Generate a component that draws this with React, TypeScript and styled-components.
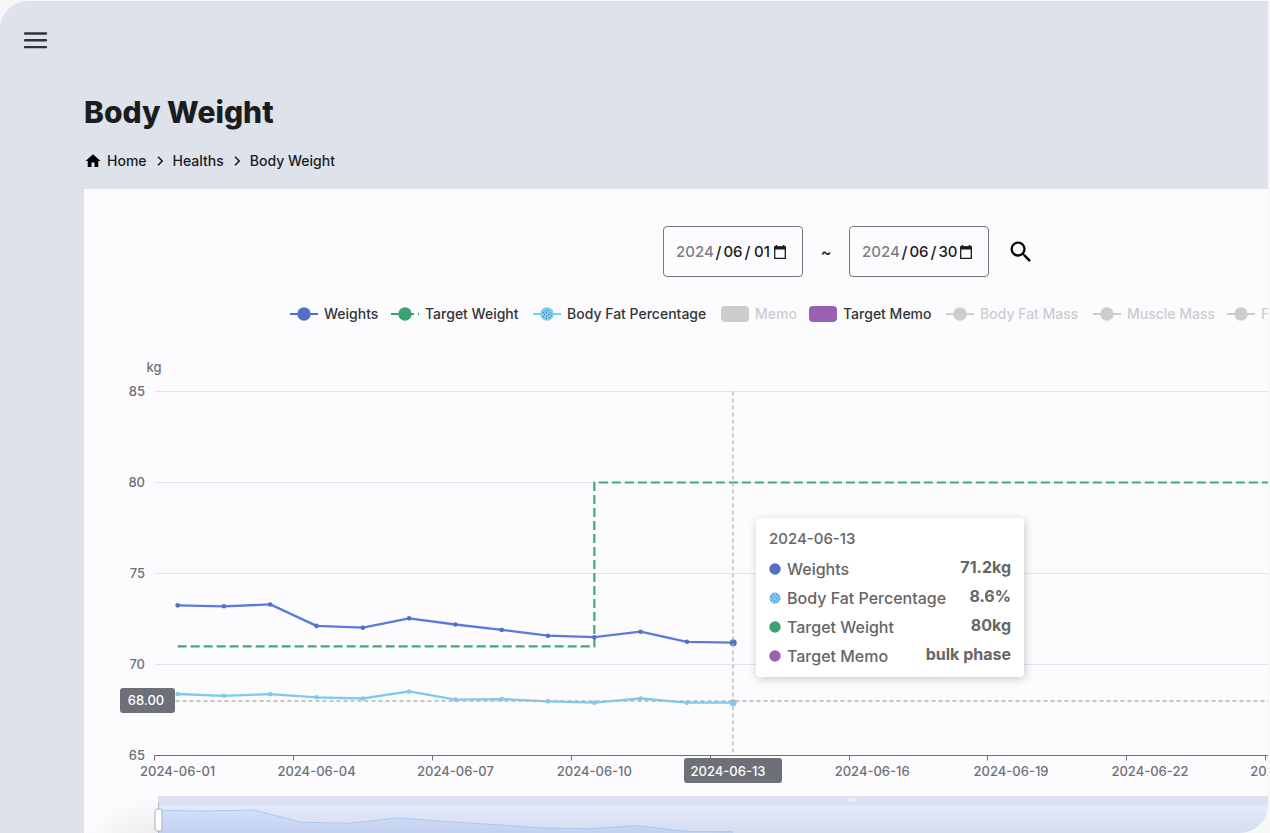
import React from "react";
import styled, { createGlobalStyle } from "styled-components";

const GlobalStyle = createGlobalStyle`
  * { box-sizing: border-box; }
  body {
    margin: 0;
    background: #f7f7f7;
    font-family: Inter, "Noto Sans", sans-serif;
    color: #1b1c1e;
  }
`;

const Frame = styled.div`
  height: 100vh;
  padding: 1px 2px 0 0;
`;

const AppWindow = styled.div`
  height: 100%;
  display: flex;
  overflow: hidden;
  background: #dee2eb;
  border-radius: 28px 0 28px 0;
`;

const Rail = styled.nav`
  flex: 0 0 84px;
  padding: 27px 24px;
`;

const IconButton = styled.button`
  display: flex;
  padding: 0;
  border: 0;
  background: none;
  color: inherit;
  cursor: pointer;
`;

const Main = styled.main`
  flex: 1;
  min-width: 0;
  display: flex;
  flex-direction: column;
`;

const PageHeader = styled.header`
  padding: 91px 0 18px;
`;

const Title = styled.h1`
  margin: 0;
  font-size: 30px;
  line-height: 40px;
  font-weight: 800;
`;

const Breadcrumbs = styled.nav`
  display: flex;
  align-items: center;
  gap: 7px;
  margin-top: 19px;
  font-size: 14px;
  line-height: 20px;
  font-weight: 500;
`;

const Crumb = styled.a`
  display: flex;
  align-items: center;
  gap: 5px;
  color: inherit;
  text-decoration: none;
`;

const Panel = styled.section`
  flex: 1;
  min-height: 0;
  overflow: hidden;
  background: #fcfcff;
`;

const Content = styled.div`
  position: relative;
  min-width: 1530px;
`;

const Filters = styled.form`
  display: flex;
  align-items: center;
  justify-content: center;
  padding-top: 37px;
`;

const DateBox = styled.fieldset`
  display: flex;
  align-items: center;
  width: 140px;
  height: 51px;
  margin: 0;
  padding: 0 12px;
  border: 1px solid #76777c;
  border-radius: 4px;
  font-size: 16px;
  font-weight: 500;
`;

const DatePart = styled.input<{ $chars: number; $muted?: boolean }>`
  width: ${(p) => (p.$chars === 4 ? 38 : 20)}px;
  padding: 0;
  border: 0;
  outline: 0;
  background: none;
  font: inherit;
  font-size: 15px;
  line-height: 20px;
  text-align: center;
  color: ${(p) => (p.$muted ? "#7d7e82" : "#1b1c1e")};
`;

const Slash = styled.span`
  width: 9px;
  text-align: center;
`;

const Tilde = styled.span`
  width: 46px;
  text-align: center;
  font-size: 16px;
  font-weight: 500;
`;

const SearchButton = styled(IconButton)`
  margin-left: 18px;
`;

const Legend = styled.ul`
  display: grid;
  grid-template-columns: 101px 142px 188px 88px 137px 147px 134px auto;
  margin: 27px 0 18px;
  padding: 0 0 0 206px;
  list-style: none;
`;

const LegendItem = styled.li<{ $off?: boolean }>`
  display: flex;
  align-items: center;
  gap: 6px;
  font-size: 14px;
  line-height: 20px;
  font-weight: 500;
  white-space: nowrap;
  color: ${(p) => (p.$off ? "#cccccf" : "#333438")};
`;

const Chart = styled.svg`
  display: block;
  font-family: inherit;
`;

const AxisText = styled.text`
  font-size: 13px;
  font-weight: 500;
  fill: #6e7079;
`;

const PointerText = styled(AxisText)`
  fill: #ffffff;
`;

const Tooltip = styled.div`
  position: absolute;
  left: 672px;
  top: 329px;
  width: 268px;
  padding: 10px 13px;
  border-radius: 4px;
  background: #ffffff;
  box-shadow: 1px 2px 10px rgba(0, 0, 0, 0.2);
  color: #666666;
  font-size: 16px;
`;

const TooltipTitle = styled.div`
  line-height: 22px;
  font-size: 15px;
  font-weight: 500;
`;

const TooltipRow = styled.div`
  display: flex;
  align-items: center;
  margin-top: 8px;
  line-height: 22px;

  & + & {
    margin-top: 7px;
  }
`;

const TooltipName = styled.span`
  flex: 1;
  margin-left: 6px;
  font-weight: 500;
`;

const TooltipValue = styled.strong`
  padding-bottom: 4px;
  line-height: 18px;
  font-weight: 700;
`;

const BLUE = "#5470c6";
const GREEN = "#3ba272";
const SKY = "#7ccbee";
const PURPLE = "#9a60b4";
const OFF = "#cccccf";

const DECAL = [
  [-2, -4], [1, -4], [-4, -2], [-1, -2], [3, -2], [-3, 0], [1, 0], [4, 1], [-1, 2], [-4, 2], [2, 3], [-1, 4],
];

function Dots({ cx, cy }: { cx: number; cy: number }) {
  return (
    <g fill="#3468ae">
      {DECAL.map(([x, y]) => (
        <rect key={`${x},${y}`} x={cx + x} y={cy + y} width="1" height="1" opacity="0.75" />
      ))}
    </g>
  );
}

type Entry = { name: string; color: string; shape?: "block"; dotted?: boolean; dashed?: boolean; off?: boolean };

const LEGEND: Entry[] = [
  { name: "Weights", color: BLUE },
  { name: "Target Weight", color: GREEN, dashed: true },
  { name: "Body Fat Percentage", color: SKY, dotted: true },
  { name: "Memo", color: OFF, shape: "block", off: true },
  { name: "Target Memo", color: PURPLE, shape: "block" },
  { name: "Body Fat Mass", color: OFF, off: true },
  { name: "Muscle Mass", color: OFF, off: true },
  { name: "F", color: OFF, off: true },
];

function LegendMark({ entry }: { entry: Entry }) {
  return (
    <svg width="28" height="16" aria-hidden="true">
      {entry.shape === "block" ? (
        <rect width="28" height="16" rx="4" fill={entry.color} />
      ) : (
        <>
          <path d="M0 8H28" stroke={entry.color} strokeWidth="2" strokeDasharray={entry.dashed ? "23 4 2 9" : undefined} />
          <circle cx="14" cy="8" r="6.7" fill={entry.color} />
          {entry.dotted && <Dots cx={14} cy={8} />}
        </>
      )}
    </svg>
  );
}

function DateField({ label, year, month, day }: { label: string; year: string; month: string; day: string }) {
  return (
    <DateBox aria-label={label}>
      <DatePart aria-label="Year" defaultValue={year} $chars={4} $muted />
      <Slash>/</Slash>
      <DatePart aria-label="Month" defaultValue={month} $chars={2} />
      <Slash>/</Slash>
      <DatePart aria-label="Day" defaultValue={day} $chars={2} />
      <IconButton type="button" aria-label="Open calendar">
        <svg width="16" height="16" viewBox="0 0 16 16">
          <path d="M2.7 3H13.3V14.3H2.7Z" fill="none" stroke="#1b1c1e" strokeWidth="1.3" />
          <path d="M2 2.4H14V5.6H2ZM3.6 1H5.2V3H3.6ZM10.8 1H12.4V3H10.8Z" fill="#1b1c1e" />
        </svg>
      </IconButton>
    </DateBox>
  );
}

function Chevron() {
  return (
    <svg width="12" height="12" viewBox="0 0 12 12" aria-hidden="true">
      <path d="M4 1.8 8.2 6 4 10.2" fill="none" stroke="#1b1c1e" strokeWidth="1.6" />
    </svg>
  );
}

const STEP = 46.3;
const LEFT = 70.5;
const FLOOR = 413.5;
const dayX = (i: number) => LEFT + STEP * (i + 0.5);
const kgY = (kg: number) => FLOOR - (kg - 65) * 18.2;

const WEIGHTS = [73.25, 73.2, 73.3, 72.12, 72.02, 72.54, 72.2, 71.9, 71.58, 71.5, 71.8, 71.25, 71.2];
const FAT = [68.38, 68.28, 68.37, 68.2, 68.13, 68.52, 68.07, 68.1, 67.98, 67.9, 68.13, 67.9, 67.9];
const TICK_LABELS = ["01", "04", "07", "10", "13", "16", "19", "22", "25"];
const ACTIVE_DAY = "13";

const toPath = (values: number[], y: (v: number) => number) =>
  values.map((v, i) => `${i ? "L" : "M"}${dayX(i).toFixed(1)} ${y(v).toFixed(1)}`).join("");

function Series({ values, color, line }: { values: number[]; color: string; line: string }) {
  return (
    <g fill={color}>
      <path d={toPath(values, kgY)} fill="none" stroke={line} strokeWidth="2.3" strokeLinejoin="bevel" />
      {values.map((v, i) => (
        <circle key={i} cx={dayX(i)} cy={kgY(v)} r={i === values.length - 1 ? 3.5 : 2.3} />
      ))}
    </g>
  );
}

function WeightChart() {
  const right = LEFT + STEP * 30;
  const overviewY = (v: number) => 468 + (73.3 - v) * 10.4;
  const overview = WEIGHTS.map((v, i) => `${i ? "L" : "M"}${74 + (i * 575) / 12} ${overviewY(v)}`).join("");
  return (
    <Chart width="1524" height="520" role="img" aria-label="Body weight by day">
      <defs>
        <linearGradient id="range" x1="0" y1="0" x2="0" y2="1">
          <stop offset="0" stopColor="#e4eafd" />
          <stop offset="1" stopColor="#d0d7ea" />
        </linearGradient>
        <linearGradient id="area" x1="0" y1="0" x2="0" y2="1">
          <stop offset="0" stopColor="#d1dff9" />
          <stop offset="1" stopColor="#bccaea" />
        </linearGradient>
        <radialGradient id="shade">
          <stop offset="0" stopColor="#000" stopOpacity="0.1" />
          <stop offset="1" stopColor="#000" stopOpacity="0" />
        </radialGradient>
      </defs>
      <AxisText x="70" y="30" textAnchor="middle">kg</AxisText>
      {[70, 75, 80, 85].map((kg) => (
        <path key={kg} d={`M${LEFT} ${kgY(kg)}H${right}`} stroke="#e0e6f1" />
      ))}
      {[65, 70, 75, 80, 85].map((kg) => (
        <AxisText key={kg} x="61" y={kgY(kg) + 4} textAnchor="end">{kg}</AxisText>
      ))}
      <path d={`M${LEFT} ${FLOOR}H${right}`} stroke="#6e7079" />
      {TICK_LABELS.map((day, i) => (
        <g key={day}>
          <path d={`M${Math.round(LEFT + i * STEP * 3 - 0.5) + 0.5} ${FLOOR}v5`} stroke="#6e7079" />
          {day !== ACTIVE_DAY && (
            <AxisText x={dayX(i * 3)} y="434" textAnchor="middle">2024-06-{day}</AxisText>
          )}
        </g>
      ))}

      <path
        d={`M${dayX(0)} ${kgY(71)}H${dayX(9)}V${kgY(80)}H${right}`}
        fill="none"
        stroke="#42aa7a"
        strokeWidth="2.2"
        strokeDasharray="9 4"
      />
      <Series values={FAT} color={SKY} line={SKY} />
      <Series values={WEIGHTS} color={BLUE} line="#5b7bdc" />

      <g stroke="#b2b3b8" strokeDasharray="4 3">
        <path d={`M${LEFT} 359H${right}`} strokeWidth="1.3" />
        <path d={`M649 ${kgY(85)}V${FLOOR}`} strokeWidth="1.3" />
      </g>
      <rect x="36" y="346" width="55" height="25" rx="3" fill="#6e7079" />
      <PointerText x="62" y="363" textAnchor="middle">68.00</PointerText>
      <rect x="600" y="416" width="98" height="25" rx="3" fill="#6e7079" />
      <PointerText x="644" y="434" textAnchor="middle">2024-06-13</PointerText>

      <ellipse cx="74" cy="520" rx="82" ry="66" fill="url(#shade)" />
      <rect x="74" y="454" width="1389" height="9" fill="#dbe1f0" />
      <rect x="74" y="463" width="1389" height="40" fill="url(#range)" />
      <path d={`${overview}V503H74Z`} fill="url(#area)" />
      <path d={overview} fill="none" stroke="#a8c8f0" />
      <path d="M765.5 456v4M768 456v4M770.5 456v4" stroke="#fff" />
      <path d="M74.5 461V503" stroke="#acb8d1" />
      <rect x="71" y="467" width="7" height="22" rx="2" fill="#fff" stroke="#a9adb7" />
    </Chart>
  );
}

const READINGS = [
  { name: "Weights", value: "71.2kg", color: BLUE },
  { name: "Body Fat Percentage", value: "8.6%", color: SKY, dotted: true },
  { name: "Target Weight", value: "80kg", color: GREEN },
  { name: "Target Memo", value: "bulk phase", color: PURPLE },
];

export default function App() {
  return (
    <Frame>
      <GlobalStyle />
      <AppWindow>
        <Rail>
          <IconButton aria-label="Menu">
            <svg width="24" height="24" viewBox="0 0 24 24">
              <path d="M1 5.5H22M1 12.3H22M1 19.1H22" stroke="#303236" strokeWidth="2.4" strokeLinecap="round" />
            </svg>
          </IconButton>
        </Rail>
        <Main>
          <PageHeader>
            <Title>Body Weight</Title>
            <Breadcrumbs aria-label="Breadcrumb">
              <Crumb href="#home">
                <svg width="18" height="18" viewBox="0 0 24 24" aria-hidden="true">
                  <path d="M10 20v-6h4v6h5v-8h3L12 3 2 12h3v8z" fill="#000" />
                </svg>
                Home
              </Crumb>
              <Chevron />
              <Crumb href="#healths">Healths</Crumb>
              <Chevron />
              <Crumb href="#body-weight">Body Weight</Crumb>
            </Breadcrumbs>
          </PageHeader>
          <Panel>
            <Content>
              <Filters>
                <DateField label="From" year="2024" month="06" day="01" />
                <Tilde>~</Tilde>
                <DateField label="To" year="2024" month="06" day="30" />
                <SearchButton type="button" aria-label="Search">
                  <svg width="28" height="28" viewBox="0 0 24 24">
                    <path
                      d="M15.5 14h-.79l-.28-.27A6.47 6.47 0 0 0 16 9.5 6.5 6.5 0 1 0 9.5 16c1.61 0 3.09-.59 4.23-1.57l.27.28v.79l5 4.99L20.49 19zm-6 0C7.01 14 5 11.99 5 9.5S7.01 5 9.5 5 14 7.01 14 9.5 11.99 14 9.5 14"
                      fill="#000"
                    />
                  </svg>
                </SearchButton>
              </Filters>
              <Legend>
                {LEGEND.map((entry) => (
                  <LegendItem key={entry.name} $off={entry.off}>
                    <LegendMark entry={entry} />
                    {entry.name}
                  </LegendItem>
                ))}
              </Legend>
              <WeightChart />
              <Tooltip role="tooltip">
                <TooltipTitle>2024-06-13</TooltipTitle>
                {READINGS.map((r) => (
                  <TooltipRow key={r.name}>
                    <svg width="12" height="12" aria-hidden="true">
                      <circle cx="6" cy="6" r="5.7" fill={r.color} />
                      {r.dotted && <Dots cx={6} cy={6} />}
                    </svg>
                    <TooltipName>{r.name}</TooltipName>
                    <TooltipValue>{r.value}</TooltipValue>
                  </TooltipRow>
                ))}
              </Tooltip>
            </Content>
          </Panel>
        </Main>
      </AppWindow>
    </Frame>
  );
}
